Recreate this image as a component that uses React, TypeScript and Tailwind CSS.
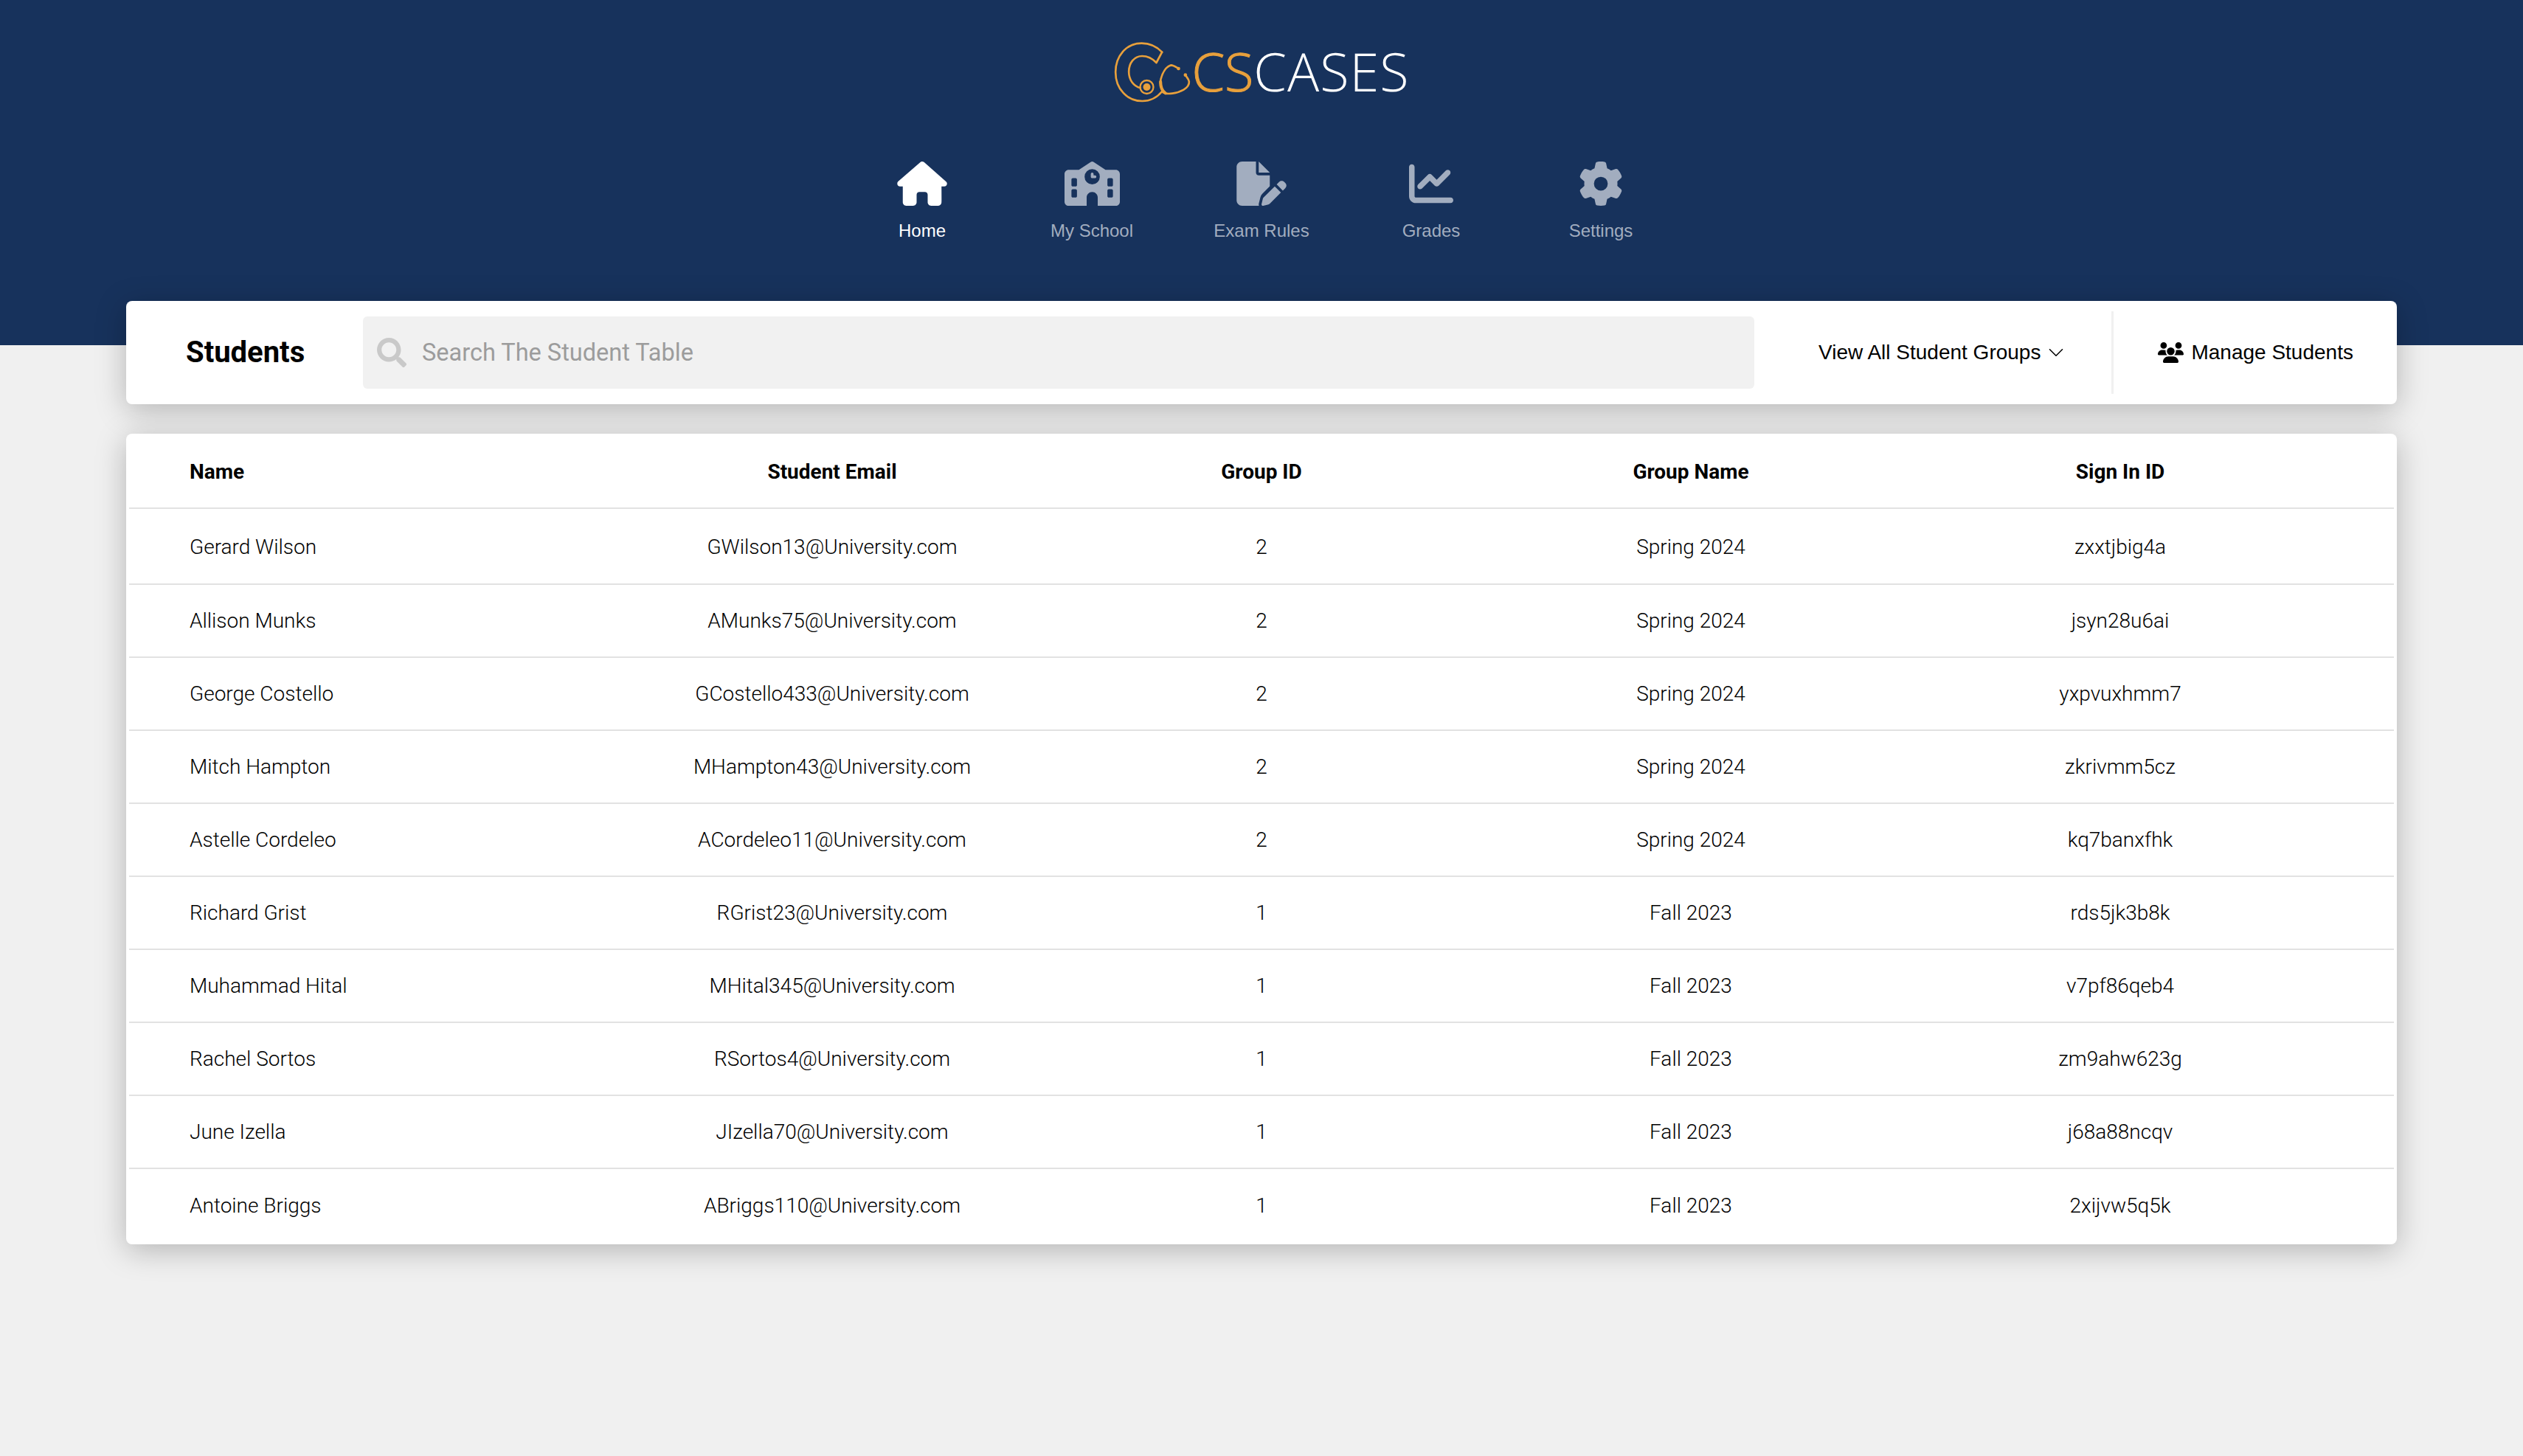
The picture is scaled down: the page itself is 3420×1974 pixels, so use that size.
import React from 'react';
import { FaSearch } from 'react-icons/fa';
import { FaHouse, FaSchool, FaChartLine, FaUsers, FaFilePen, FaGear } from 'react-icons/fa6';
import { ChevronDown } from 'lucide-react';

const navItems = [
  { label: 'Home', icon: FaHouse, active: true, box: 'w-[68px] h-[60px]' },
  { label: 'My School', icon: FaSchool, active: false, box: 'w-[75px] h-[60px]' },
  { label: 'Exam Rules', icon: FaFilePen, active: false, box: 'w-[68px] h-[60px]' },
  { label: 'Grades', icon: FaChartLine, active: false, box: 'w-[60px] h-[60px]' },
  { label: 'Settings', icon: FaGear, active: false, box: 'w-[60px] h-[60px]' },
];

const students = [
  ['Gerard Wilson', 'GWilson13@University.com', '2', 'Spring 2024', 'zxxtjbig4a'],
  ['Allison Munks', 'AMunks75@University.com', '2', 'Spring 2024', 'jsyn28u6ai'],
  ['George Costello', 'GCostello433@University.com', '2', 'Spring 2024', 'yxpvuxhmm7'],
  ['Mitch Hampton', 'MHampton43@University.com', '2', 'Spring 2024', 'zkrivmm5cz'],
  ['Astelle Cordeleo', 'ACordeleo11@University.com', '2', 'Spring 2024', 'kq7banxfhk'],
  ['Richard Grist', 'RGrist23@University.com', '1', 'Fall 2023', 'rds5jk3b8k'],
  ['Muhammad Hital', 'MHital345@University.com', '1', 'Fall 2023', 'v7pf86qeb4'],
  ['Rachel Sortos', 'RSortos4@University.com', '1', 'Fall 2023', 'zm9ahw623g'],
  ['June Izella', 'JIzella70@University.com', '1', 'Fall 2023', 'j68a88ncqv'],
  ['Antoine Briggs', 'ABriggs110@University.com', '1', 'Fall 2023', '2xijvw5q5k'],
];

const headers = ['Name', 'Student Email', 'Group ID', 'Group Name', 'Sign In ID'];

const Logo = () => (
  <svg viewBox="180 105 320 255" className="w-[107px] h-[85px]" fill="none" stroke="#E8A03C" strokeLinecap="round" strokeLinejoin="round">
    <path
      d="M378 152 C355 128 325 116 295 116 C232 116 189 168 189 233 C189 300 235 351 298 351 C330 351 358 336 378 312"
      strokeWidth="8"
    />
    <path d="M378 152 L355 195 C338 177 318 168 297 168 C265 168 243 196 243 232 C243 265 262 290 290 298" strokeWidth="8" />
    <circle cx="316" cy="294" r="27" strokeWidth="7" />
    <circle cx="316" cy="294" r="15" fill="#E8A03C" stroke="none" />
    <path d="M378 312 C388 322 405 322 420 320 C450 316 490 300 488 272 C486 260 478 255 473 245" strokeWidth="8" />
    <path d="M385 316 C372 300 368 282 373 262 C380 235 395 210 415 205 C425 205 435 213 445 219" strokeWidth="8" />
    <path d="M372 272 C372 295 378 310 392 319" strokeWidth="12" />
    <circle cx="445" cy="219" r="7" fill="#E8A03C" stroke="none" />
    <circle cx="473" cy="245" r="7" fill="#E8A03C" stroke="none" />
  </svg>
);

const App = () => {
  return (
    <div className="min-h-screen bg-[#f0f0f0] font-['Roboto',sans-serif]">
      <header className="h-[468px] bg-[#17325c] flex flex-col items-center pt-[58px]">
        <div className="flex items-center h-[79px]">
          <Logo />
          <div className="-ml-[1px] -mt-[4px] text-[72px] leading-none font-['Open_Sans',sans-serif] font-light flex">
            <span className="text-[#E8A03C] [-webkit-text-stroke:1px_#E8A03C]">CS</span>
            <span className="text-white tracking-[1px]">CASES</span>
          </div>
        </div>
        <nav className="flex mt-[82px]">
          {navItems.map(item => {
            const Icon = item.icon;
            return (
              <div
                key={item.label}
                className={`w-[230px] flex flex-col items-center ${item.active ? 'text-white' : 'text-[#a2adbf]'}`}
              >
                <Icon className={item.box} />
                <span className="mt-[20px] text-[24px] leading-[28px] font-['Liberation_Sans',sans-serif]">{item.label}</span>
              </div>
            );
          })}
        </nav>
      </header>

      <main className="mx-[171px] -mt-[60px] relative">
        <div className="h-[140px] bg-white rounded-[8px] shadow-[0_8px_40px_rgba(0,0,0,0.25)] flex items-center">
          <h1 className="ml-[81px] w-[241px] text-[40px] font-bold text-black leading-none">Students</h1>
          <div className="-ml-[1px] w-[1886px] h-[98px] bg-[#f1f1f1] rounded-[6px] flex items-center pl-[19px]">
            <FaSearch className="w-[40px] h-[40px] text-[#c9c9c9]" />
            <span className="ml-[21px] text-[32.5px] text-[#9c9c9c]">Search The Student Table</span>
          </div>
          <div className="ml-[87px] flex items-center font-['Liberation_Sans',sans-serif] text-[28px] text-black">
            <span>View All Student Groups</span>
            <ChevronDown className="ml-[4px] w-[34px] h-[34px]" strokeWidth={1.1} />
          </div>
          <div className="ml-[58px] w-[3px] h-[112px] bg-[#f0f0f0]" />
          <div className="ml-[60px] flex items-center font-['Liberation_Sans',sans-serif] text-[28px] text-black">
            <FaUsers className="w-[35px] h-[28px]" />
            <span className="ml-[10px]">Manage Students</span>
          </div>
        </div>

        <div className="mt-[40px] bg-white rounded-[8px] shadow-[0_8px_40px_rgba(0,0,0,0.25)] px-[4px] pb-[3px]">
          <div className="h-[102px] pt-[4px] grid grid-cols-5 px-[80px] items-center text-[28px] font-bold text-black border-b-[2px] border-[#e2e2e2]">
            {headers.map((h, i) => (
              <div key={h} className={i === 0 ? 'pl-[2px] text-left' : 'text-center'}>{h}</div>
            ))}
          </div>
          {students.map((row, r) => (
            <div
              key={row[0]}
              className={`${r === 0 ? 'h-[103px] pt-[2px]' : 'h-[99px]'} grid grid-cols-5 px-[80px] items-center text-[28px] font-light text-black ${r < students.length - 1 ? 'border-b-[2px] border-[#e2e2e2]' : ''}`}
            >
              {row.map((cell, i) => (
                <div key={i} className={i === 0 ? 'pl-[2px] text-left' : 'text-center'}>{cell}</div>
              ))}
            </div>
          ))}
        </div>
      </main>
    </div>
  );
};

export default App;
